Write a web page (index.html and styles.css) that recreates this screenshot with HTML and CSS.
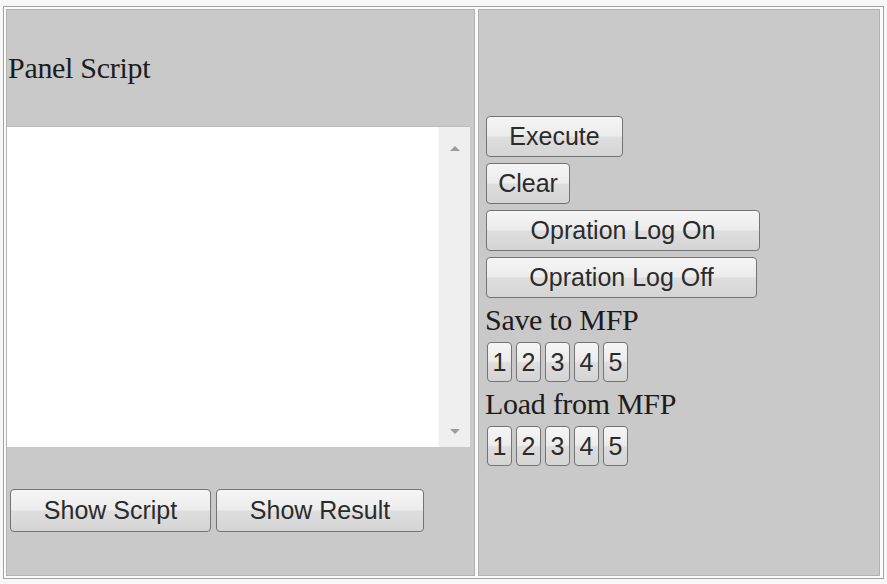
FILE: index.html
```html
<!DOCTYPE html>
<html lang="en">

<head>
	<meta charset="UTF-8">
	<title>Panel Script</title>

	<link rel="stylesheet" href="styles.css">

</head>

<body>

	<div class="frame">

		<!-- script editor -->
		<div class="cell left">
			<div class="title">Panel Script</div>

			<div class="script_box">
				<textarea class="script" spellcheck="false"></textarea>
				<div class="scroll">
					<span class="arrow up"></span>
					<span class="arrow down"></span>
				</div>
			</div>

			<div class="tabs">
				<button class="btn show_script">Show Script</button>
				<button class="btn show_result">Show Result</button>
			</div>
		</div>

		<!-- commands -->
		<div class="cell right">
			<button class="btn execute">Execute</button>
			<button class="btn clear">Clear</button>
			<button class="btn log_on">Opration Log On</button>
			<button class="btn log_off">Opration Log Off</button>

			<div class="label">Save to MFP</div>
			<div class="slots">
				<button class="btn slot">1</button>
				<button class="btn slot">2</button>
				<button class="btn slot">3</button>
				<button class="btn slot">4</button>
				<button class="btn slot">5</button>
			</div>

			<div class="label">Load from MFP</div>
			<div class="slots">
				<button class="btn slot">1</button>
				<button class="btn slot">2</button>
				<button class="btn slot">3</button>
				<button class="btn slot">4</button>
				<button class="btn slot">5</button>
			</div>
		</div>

	</div>

</body>

</html>
```

FILE: styles.css
```css
* {
	box-sizing: border-box;
}

body {
	margin: 0;
	padding: 6px 0 0 3px;
	background: #f7f7f7;
	font-family: 'Liberation Serif', 'Times New Roman', serif;
	color: #1c1c1c;
}

.frame {
	display: flex;
	gap: 3px;
	width: 881px;
	height: 573px;
	padding: 2px;
	border: 1px solid #a3a3a3;
	background: #fafafa;
}

.cell {
	background: #c9c9c9;
	border: 1px solid #b1b1b1;
}

.left {
	width: 469px;
	padding-top: 42px;
}

.right {
	width: 402px;
	display: flex;
	flex-direction: column;
	align-items: flex-start;
	gap: 6px;
	padding: 106px 0 0 7px;
}

.title,
.label {
	font-size: 30px;
	line-height: 32px;
}

.title {
	padding-left: 1px;
	letter-spacing: -0.3px;
}

.label {
	letter-spacing: -0.3px;
	margin-left: -1px;
}

.script_box {
	display: flex;
	width: 463px;
	height: 321px;
	margin-top: 42px;
	background: #fff;
	border-top: 1px solid #bcbcbc;
}

.script {
	flex: 1;
	border: 0;
	resize: none;
	outline: none;
	background: #fff;
	font-family: 'Liberation Mono', monospace;
	font-size: 14px;
}

.scroll {
	position: relative;
	width: 32px;
	background: #efefef;
	border-left: 1px solid #f8f8f8;
}

.arrow {
	position: absolute;
	left: 11px;
	width: 0;
	height: 0;
	border-left: 5px solid transparent;
	border-right: 5px solid transparent;
}

.arrow.up {
	top: 19px;
	border-bottom: 5px solid #9c9c9c;
}

.arrow.down {
	bottom: 13px;
	border-top: 5px solid #9c9c9c;
}

.tabs {
	display: flex;
	gap: 5px;
	margin: 42px 0 0 3px;
}

.btn {
	height: 41px;
	padding: 0;
	font-family: 'Liberation Sans', Arial, sans-serif;
	font-size: 25px;
	color: #2b2b2b;
	border: 1px solid #747474;
	border-radius: 4px;
	background: linear-gradient(#f5f5f5, #ececec 48%, #dedede 52%, #d4d4d4);
}

.show_script {
	width: 201px;
	height: 43px;
}

.show_result {
	width: 208px;
	height: 43px;
}

.execute {
	width: 137px;
}

.clear {
	width: 84px;
}

.log_on {
	width: 274px;
}

.log_off {
	width: 271px;
}

.slots {
	display: flex;
	gap: 4px;
	margin-left: 1px;
}

.slot {
	width: 25px;
	height: 40px;
}
```
